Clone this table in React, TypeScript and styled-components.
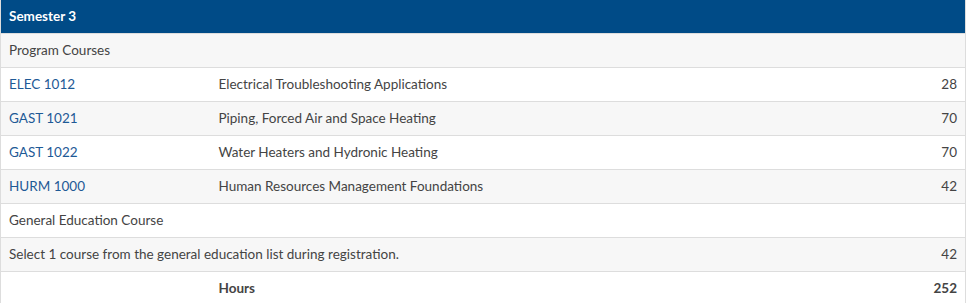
import React from 'react';
import styled, { createGlobalStyle } from 'styled-components';

const GlobalStyle = createGlobalStyle`
  body {
    margin: 0;
    background: #fff;
    font-family: Lato, "Open Sans", Arial, sans-serif;
  }
`;

interface Course {
  code: string;
  title: string;
  hours: number;
}

const programCourses: Course[] = [
  { code: 'ELEC 1012', title: 'Electrical Troubleshooting Applications', hours: 28 },
  { code: 'GAST 1021', title: 'Piping, Forced Air and Space Heating', hours: 70 },
  { code: 'GAST 1022', title: 'Water Heaters and Hydronic Heating', hours: 70 },
  { code: 'HURM 1000', title: 'Human Resources Management Foundations', hours: 42 },
];

const Table = styled.table`
  width: 966px;
  border-collapse: collapse;
  table-layout: fixed;
  border: 1px solid #ddd;
  border-top: none;
  font-size: 13.5px;
  line-height: 17px;
  color: #444;
`;

const HeadCell = styled.th`
  background: #004b87;
  color: #fff;
  font-weight: 700;
  text-align: left;
  padding: 8px 8px;
  border: none;
`;

const Row = styled.tr<{ $striped?: boolean }>`
  background: ${p => (p.$striped ? '#f7f7f7' : '#fff')};
`;

const Cell = styled.td<{ $right?: boolean; $bold?: boolean }>`
  padding: 8px 8px;
  border-top: 1px solid #ddd;
  text-align: ${p => (p.$right ? 'right' : 'left')};
  font-weight: ${p => (p.$bold ? 700 : 400)};
  vertical-align: top;
`;

const CourseLink = styled.a`
  color: #1e5a96;
  text-decoration: none;
`;

export default function App() {
  let stripe = 0;
  const next = () => stripe++ % 2 === 0;

  return (
    <>
      <GlobalStyle />
      <Table>
        <colgroup>
          <col style={{ width: 210 }} />
          <col />
          <col style={{ width: 120 }} />
        </colgroup>
        <thead>
          <tr>
            <HeadCell colSpan={3}>Semester 3</HeadCell>
          </tr>
        </thead>
        <tbody>
          <Row $striped={next()}>
            <Cell colSpan={3}>Program Courses</Cell>
          </Row>
          {programCourses.map(c => (
            <Row key={c.code} $striped={next()}>
              <Cell>
                <CourseLink href="#">{c.code}</CourseLink>
              </Cell>
              <Cell>{c.title}</Cell>
              <Cell $right>{c.hours}</Cell>
            </Row>
          ))}
          <Row $striped={next()}>
            <Cell colSpan={3}>General Education Course</Cell>
          </Row>
          <Row $striped={next()}>
            <Cell colSpan={2}>Select 1 course from the general education list during registration.</Cell>
            <Cell $right>42</Cell>
          </Row>
          <Row $striped={next()}>
            <Cell />
            <Cell $bold>Hours</Cell>
            <Cell $right $bold>252</Cell>
          </Row>
        </tbody>
      </Table>
    </>
  );
}
